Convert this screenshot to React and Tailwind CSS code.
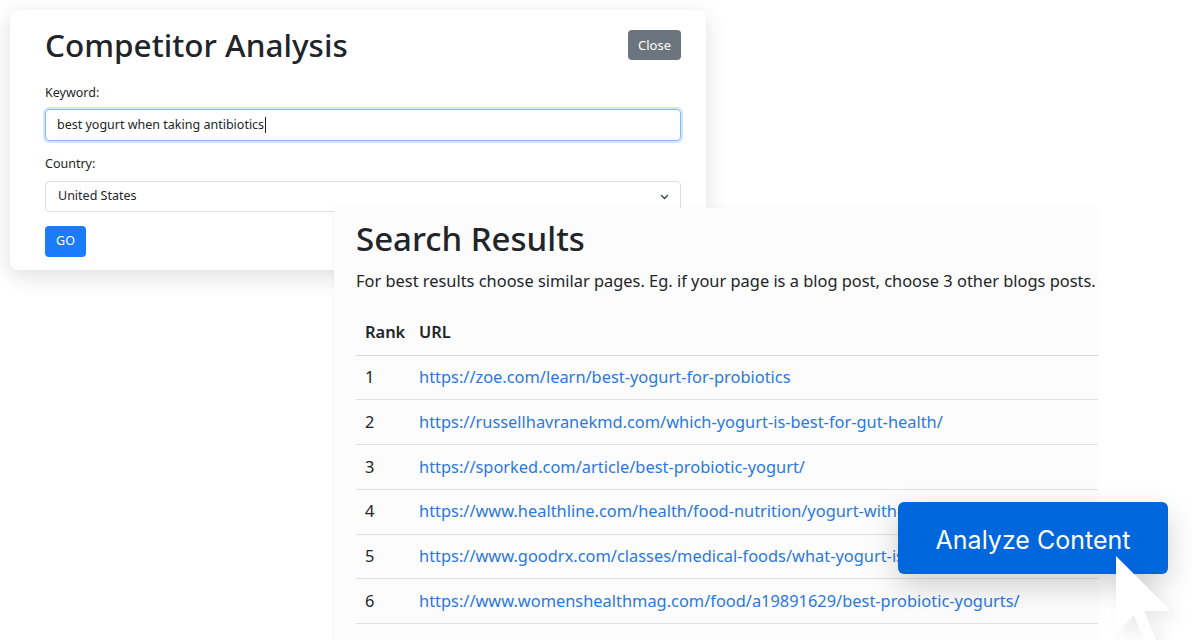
import React from "react";

const rows = [
  ["1", "https://zoe.com/learn/best-yogurt-for-probiotics"],
  ["2", "https://russellhavranekmd.com/which-yogurt-is-best-for-gut-health/"],
  ["3", "https://sporked.com/article/best-probiotic-yogurt/"],
  ["4", "https://www.healthline.com/health/food-nutrition/yogurt-with-antibiotics"],
  ["5", "https://www.goodrx.com/classes/medical-foods/what-yogurt-is-best-with-antibiotics"],
  ["6", "https://www.womenshealthmag.com/food/a19891629/best-probiotic-yogurts/"],
];

export default function App() {
  return (
    <div
      className="relative w-[1192px] h-[640px] bg-white overflow-hidden text-[#212529]"
      style={{ fontFamily: '"Noto Sans", "Open Sans", sans-serif' }}
    >
      {/* Competitor Analysis card */}
      <div className="absolute left-[10px] top-[10px] w-[696px] h-[260px] rounded-lg bg-white shadow-[0_6px_22px_rgba(0,0,0,0.13)] pl-[35px] pr-[25px] pt-[16px]">
        <div className="flex items-center justify-between h-[38px]">
          <h2 className="text-[31.5px] font-medium leading-[38px]">Competitor Analysis</h2>
          <button className="h-[30px] w-[53px] rounded-[4px] bg-[#6c757d] text-white text-[13px] leading-none">Close</button>
        </div>
        <div className="mt-[19px] text-[12.5px] leading-[20px]">Keyword:</div>
        <div className="mt-[6px] h-[32px] rounded-[4px] border border-[#86b7fe] shadow-[0_0_0_2px_rgba(13,110,253,0.18)] flex items-center px-[11px] text-[12.5px]">
          <span>best yogurt when taking antibiotics</span>
          <span className="w-px h-[16px] bg-[#222] ml-px"></span>
        </div>
        <div className="mt-[13px] text-[12.5px] leading-[20px]">Country:</div>
        <div className="mt-[7px] h-[31px] rounded-[4px] border border-[#dcdfe3] flex items-center justify-between pl-[12px] pr-[10px] text-[12.5px]">
          <span>United States</span>
          <svg width="11" height="8" viewBox="0 0 16 16" fill="none" stroke="#343a40" strokeWidth="2.5" strokeLinecap="round" strokeLinejoin="round">
            <path d="M2 5l6 6 6-6" />
          </svg>
        </div>
        <button className="mt-[14px] h-[31px] w-[41px] rounded-[4px] bg-[#1a7bfd] text-white text-[12.5px] leading-none">GO</button>
      </div>

      {/* Search Results panel */}
      <div className="absolute left-[334px] top-[208px] w-[764px] h-[440px] bg-[#fcfcfc] shadow-[-2px_0_6px_rgba(0,0,0,0.03)] pl-[22px] pt-[12px]">
        <h2 className="text-[33px] font-medium leading-[38px]">Search Results</h2>
        <p className="mt-[11px] text-[16.4px] leading-[24px] whitespace-nowrap">
          For best results choose similar pages. Eg. if your page is a blog post, choose 3 other blogs posts.
        </p>
        <table className="mt-[17px] w-[742px] text-[16.4px] border-collapse">
          <thead>
            <tr className="h-[45px] border-b border-[#d4d6d9]">
              <th className="text-left font-semibold pl-[9px] w-[63px]">Rank</th>
              <th className="text-left font-semibold">URL</th>
            </tr>
          </thead>
          <tbody>
            {rows.map(([n, url]) => (
              <tr key={n} className="h-[44.8px] border-b border-[#dfe1e4]">
                <td className="pl-[9px]">{n}</td>
                <td className="text-[#2b78dd] whitespace-nowrap">{url}</td>
              </tr>
            ))}
          </tbody>
        </table>
      </div>

      {/* Analyze Content button */}
      <div
        className="absolute left-[898px] top-[502px] w-[270px] h-[72px] rounded-md bg-[#0066dc] text-white flex items-center justify-center pt-[6px] text-[25px] shadow-[0_12px_30px_rgba(0,0,0,0.18)]"
        style={{ fontFamily: '"Inter", "Noto Sans", sans-serif', fontWeight: 400 }}
      >
        Analyze Content
      </div>

      {/* Cursor */}
      <svg
        className="absolute left-[1115px] top-[555px]"
        width="80"
        height="100"
        viewBox="0 0 80 100"
        style={{ filter: "drop-shadow(8px 8px 8px rgba(0,0,0,0.08))" }}
      >
        <polygon points="1,1 1,78 19,60 32,92 42,87 29,56 56,56" fill="#ffffff" />
      </svg>
    </div>
  );
}
